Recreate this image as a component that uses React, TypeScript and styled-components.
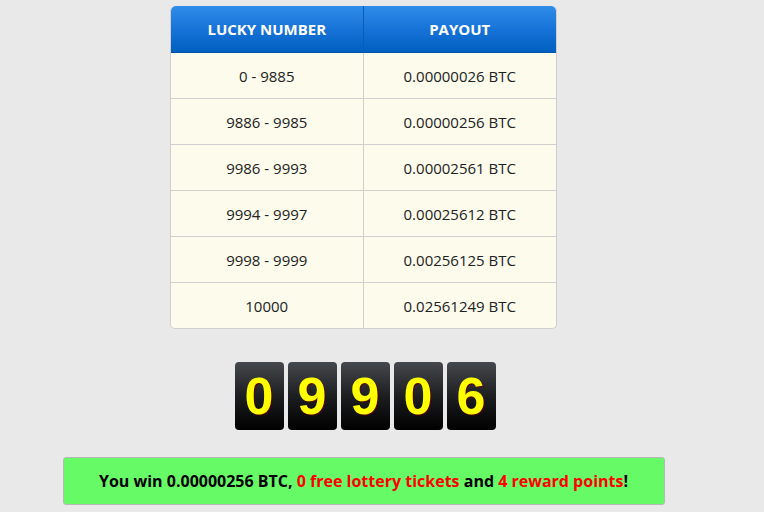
import React, { FC } from 'react';
import styled, { createGlobalStyle } from 'styled-components';

const GlobalStyle = createGlobalStyle`
    html, body {
        margin: 0;
        padding: 0;
        background-color: #e9e9e9;
        font-family: "Open Sans", "Liberation Sans", sans-serif;
    }
`;

const rows: Array<[string, string]> = [
    ["0 - 9885", "0.00000026 BTC"],
    ["9886 - 9985", "0.00000256 BTC"],
    ["9986 - 9993", "0.00002561 BTC"],
    ["9994 - 9997", "0.00025612 BTC"],
    ["9998 - 9999", "0.00256125 BTC"],
    ["10000", "0.02561249 BTC"],
];

const digits = ["0", "9", "9", "0", "6"];

const App: FC = () => {
    return (
        <StyledPage>
            <GlobalStyle />
            <StyledTable>
                <thead>
                    <tr>
                        <HeadCell>Lucky Number</HeadCell>
                        <HeadCell>Payout</HeadCell>
                    </tr>
                </thead>
                <tbody>
                    {rows.map(([range, payout], i) => (
                        <tr key={range}>
                            <BodyCell $last={i === rows.length - 1}>{range}</BodyCell>
                            <BodyCell $last={i === rows.length - 1}>{payout}</BodyCell>
                        </tr>
                    ))}
                </tbody>
            </StyledTable>
            <DigitRow>
                {digits.map((d, i) => (
                    <DigitBox key={i}>{d}</DigitBox>
                ))}
            </DigitRow>
            <WinBox>
                You win 0.00000256 BTC, <Red>0 free lottery tickets</Red> and <Red>4 reward points</Red>!
            </WinBox>
        </StyledPage>
    );
};

const StyledPage = styled.div`
    width: 727px;
    height: 512px;
    display: flex;
    flex-direction: column;
    align-items: center;
    padding-top: 6px;
    box-sizing: border-box;
    overflow: hidden;
`;

const StyledTable = styled.table`
    width: 387px;
    border-collapse: separate;
    border-spacing: 0;
    border: 1px solid #cfcfcf;
    border-top: none;
    border-radius: 5px;
    background-color: #fcfbec;
    font-size: 15px;
    color: #222;
    table-layout: fixed;
`;

const HeadCell = styled.th`
    height: 46px;
    padding: 0;
    background: linear-gradient(to bottom, #2f8ce8 0%, #1873d8 50%, #005fc0 100%);
    color: #fff;
    font-weight: 700;
    text-transform: uppercase;
    font-size: 15px;
    text-align: center;
    border-bottom: 1px solid #0055aa;

    &:first-child {
        border-top-left-radius: 5px;
        border-right: 1px solid #0a5cb5;
    }
    &:last-child {
        border-top-right-radius: 5px;
    }
`;

const BodyCell = styled.td<{ $last: boolean }>`
    height: 45px;
    padding: 0;
    text-align: center;
    border-bottom: ${(p) => (p.$last ? 'none' : '1px solid #cfcfcf')};

    &:first-child {
        border-right: 1px solid #cfcfcf;
    }
`;

const DigitRow = styled.div`
    display: flex;
    gap: 4px;
    margin-top: 33px;
    margin-left: 3px;
`;

const DigitBox = styled.div`
    width: 49px;
    height: 68px;
    border-radius: 4px;
    background: linear-gradient(to bottom, #45484d 0%, #1d1e20 50%, #000 100%);
    color: #ffff00;
    font-family: "Liberation Sans", Arial, sans-serif;
    font-weight: 700;
    font-size: 52px;
    line-height: 68px;
    text-align: center;
    text-shadow: 1px 1px 0 #5a0000;
`;

const WinBox = styled.div`
    width: 600px;
    height: 46px;
    margin-top: 27px;
    background-color: #66fb66;
    border: 1px solid #b8b8b8;
    border-radius: 3px;
    display: flex;
    align-items: center;
    justify-content: center;
    white-space: pre;
    font-weight: 700;
    font-size: 16px;
    color: #000;
`;

const Red = styled.span`
    color: #ff0000;
`;

export default App;
